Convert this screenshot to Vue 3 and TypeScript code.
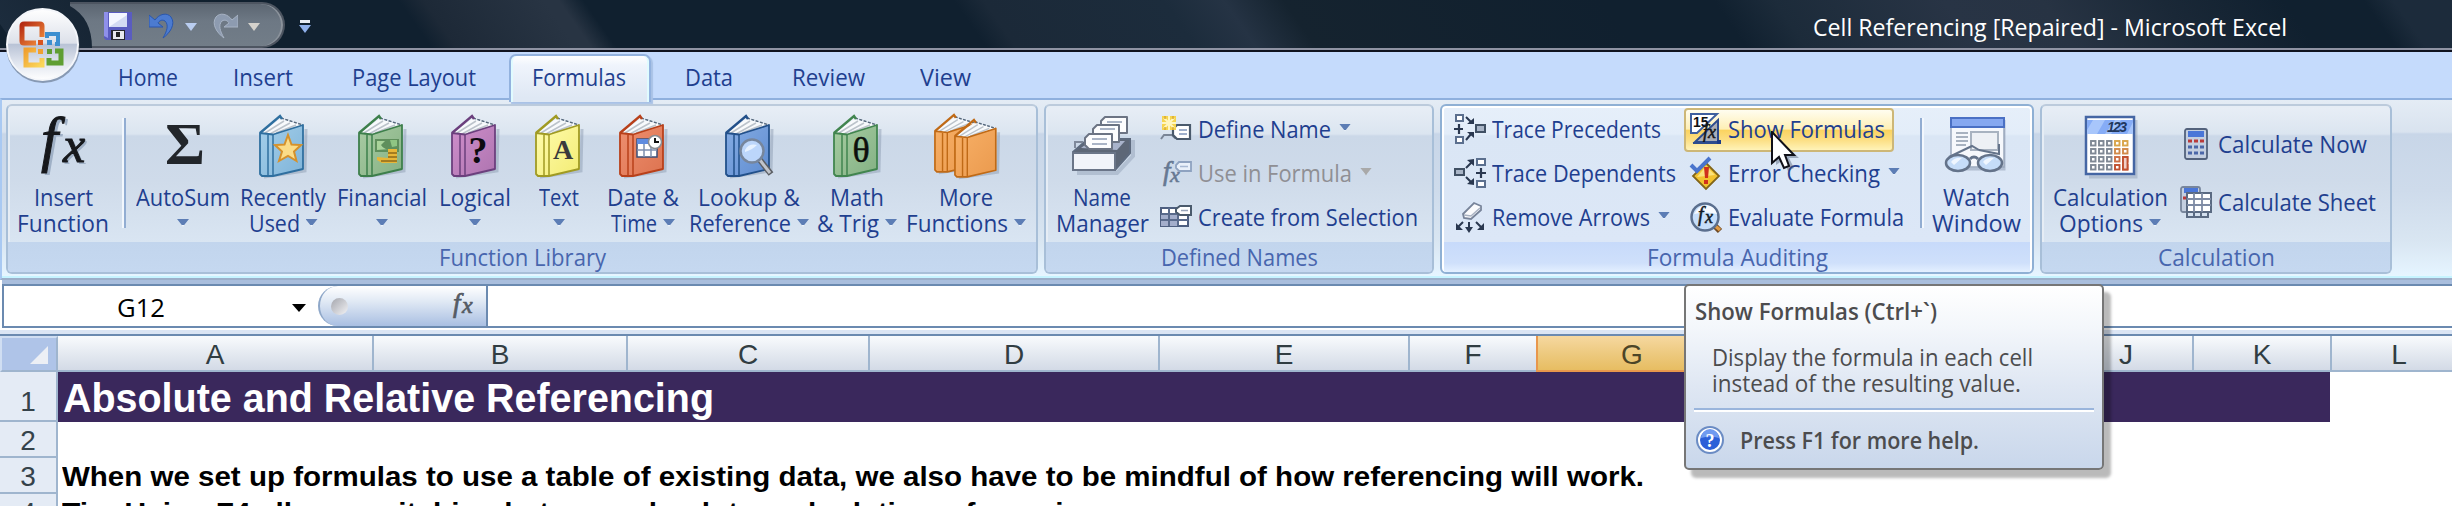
<script setup lang="ts">
import type { Directive } from 'vue'

// Condenses or widens a label so that it takes exactly the given advance width.
const vFit: Directive<HTMLElement, number> = {
  mounted(el, { value }) {
    const natural = el.getBoundingClientRect().width
    if (!natural) return
    el.style.transform = `scaleX(${value / natural})`
    el.style.marginRight = `${value - natural}px`
  },
}

interface Line { t: string; w: number }
interface Book {
  kind: string
  width: number
  lines: Line[]
  fill: string
  light: string
  edge: string
}
interface Tab { t: string; w: number; left: number; active?: boolean }
interface Column { n?: string; w: number; on?: boolean }

const tabs: Tab[] = [
  { t: 'Home', w: 60, left: 118 },
  { t: 'Insert', w: 60, left: 55 },
  { t: 'Page Layout', w: 124, left: 59 },
  { t: 'Formulas', w: 94, left: 33, active: true },
  { t: 'Data', w: 48, left: 34 },
  { t: 'Review', w: 73, left: 59 },
  { t: 'View', w: 51, left: 55 },
]

const books: Book[] = [
  { kind: 'star', width: 102, lines: [{ t: 'Recently', w: 86 }, { t: 'Used', w: 51 }], fill: '#7fb4d9', light: '#a5cfea', edge: '#2f6f9f' },
  { kind: 'money', width: 96, lines: [{ t: 'Financial', w: 90 }], fill: '#85b183', light: '#a9cba4', edge: '#3d7f4b' },
  { kind: 'question', width: 90, lines: [{ t: 'Logical', w: 72 }], fill: '#ae74b0', light: '#cf8fcb', edge: '#6b3f7d' },
  { kind: 'letter', width: 78, lines: [{ t: 'Text', w: 40 }], fill: '#f3ec74', light: '#fffcae', edge: '#a09a22' },
  { kind: 'date', width: 90, lines: [{ t: 'Date &', w: 72 }, { t: 'Time', w: 46 }], fill: '#dd7350', light: '#ee9070', edge: '#b8401a' },
  { kind: 'lens', width: 122, lines: [{ t: 'Lookup &', w: 102 }, { t: 'Reference', w: 102 }], fill: '#5f8cd0', light: '#86ade4', edge: '#22508a' },
  { kind: 'theta', width: 94, lines: [{ t: 'Math', w: 54 }, { t: '& Trig', w: 62 }], fill: '#84b184', light: '#a6cca1', edge: '#41854f' },
  { kind: 'pair', width: 124, lines: [{ t: 'More', w: 54 }, { t: 'Functions', w: 102 }], fill: '#eb9a4e', light: '#f7b067', edge: '#c06a16' },
]

// The wide unnamed column lies behind the tooltip.
const columns: Column[] = [
  { n: 'A', w: 316 }, { n: 'B', w: 254 }, { n: 'C', w: 242 }, { n: 'D', w: 290 },
  { n: 'E', w: 250 }, { n: 'F', w: 128 }, { n: 'G', w: 190, on: true }, { w: 332 },
  { n: 'J', w: 134 }, { n: 'K', w: 138 }, { n: 'L', w: 136 },
]

const keyRows = [0, 1, 2, 3]
const keyCols = [0, 1, 2, 3, 4]
const keyColor = (r: number, c: number) => (c < 3 ? '#7f8894' : ['#d9a54a', '#d18a4a', '#cc6f45', '#c05030'][r])
</script>

<template>
  <div class="window">
    <header class="titlebar">
      <div class="quick">
        <svg class="save" viewBox="0 0 28 28">
          <path d="M0 0H28V28H2L0 26Z" fill="#5a5cc0" />
          <path d="M0 0H4V26L0 24Z" fill="#8f90ea" />
          <rect x="5" y="1" width="18" height="14" fill="#f4f6ff" />
          <path d="M5 15L23 3V15Z" fill="#d3daf3" />
          <rect x="7" y="18" width="14" height="10" fill="#26262e" />
          <rect x="9" y="19" width="11" height="8" fill="#e8e8ee" />
          <rect x="12" y="20" width="4" height="5" fill="#222" />
        </svg>
        <svg class="undo" viewBox="0 0 26 28">
          <path d="M6 8C10 2 18 0 22 5C27 12 21 21 14 26C18 19 20 13 16 9C13 7 10 9 9 11L14 15H0V3Z" fill="#4c7bd0" stroke="#2a57ae" stroke-width="1" />
        </svg>
        <span class="drop blue"></span>
        <svg class="redo" viewBox="0 0 26 28">
          <path d="M20 8C16 2 8 0 4 5C-1 12 5 21 12 26C8 19 6 13 10 9C13 7 16 9 17 11L12 15H26V3Z" fill="#8d9bb0" stroke="#a7b3c4" stroke-width="1" />
        </svg>
        <span class="drop pale"></span>
      </div>
      <div class="customize"><i></i><span class="drop blue"></span></div>
      <span v-fit="474" class="caption">Cell Referencing [Repaired] - Microsoft Excel</span>
    </header>

    <svg class="orb" viewBox="0 0 84 84">
      <defs>
        <linearGradient id="orbFill" x1="0" y1="0" x2="0" y2="1">
          <stop offset="0" stop-color="#ffffff" /><stop offset=".48" stop-color="#dde1ea" />
          <stop offset=".5" stop-color="#b9c3d6" /><stop offset=".75" stop-color="#dfe4ee" /><stop offset="1" stop-color="#ffffff" />
        </linearGradient>
        <linearGradient id="orbRed" x1="0" y1="0" x2="1" y2="1"><stop offset="0" stop-color="#b52c14" /><stop offset="1" stop-color="#f08a3a" /></linearGradient>
        <linearGradient id="orbYellow" x1="0" y1="0" x2="1" y2="1"><stop offset="0" stop-color="#f0a030" /><stop offset="1" stop-color="#fbd75a" /></linearGradient>
      </defs>
      <circle cx="43" cy="46" r="37" fill="#3c4a5c" opacity=".45" />
      <circle cx="42.500" cy="44.500" r="35.500" fill="url(#orbFill)" stroke="#f4f6fa" stroke-width="2" />
      <path d="M36 43H24Q22 43 22 41V26Q22 24 24 24H40Q42 24 42 26V37" fill="none" stroke="url(#orbRed)" stroke-width="5" />
      <path d="M47 38V34H58V44H55" fill="none" stroke="#3d8fd0" stroke-width="4" />
      <path d="M36 50H26V65H42V58" fill="none" stroke="url(#orbYellow)" stroke-width="5" />
      <path d="M55 51H61V63H49V58" fill="none" stroke="#5f9e32" stroke-width="5" />
      <rect x="38" y="40" width="5" height="5" fill="#d8541e" /><rect x="47" y="40" width="5" height="5" fill="#3d8fd0" />
      <rect x="38" y="49" width="5" height="5" fill="#f0a030" /><rect x="47" y="49" width="5" height="5" fill="#5f9e32" />
    </svg>

    <nav class="tabs">
      <span v-for="tab in tabs" :key="tab.t" class="tab" :class="{ active: tab.active }" :style="{ marginLeft: tab.left + 'px' }">
        <span v-fit="tab.w" class="label">{{ tab.t }}</span>
      </span>
    </nav>

    <section class="ribbon">
      <div class="group library">
        <div class="body">
          <div class="big insert">
            <div class="art">
              <svg width="60" height="64" viewBox="0 0 60 64">
                <g fill="#9fb0c6" transform="translate(2 2)"><text class="fx" x="9" y="46" font-size="61">f</text><text class="fx" x="30" y="48" font-size="50">x</text></g>
                <g fill="#16181c" stroke="#16181c" stroke-width="1"><text class="fx" x="8" y="46" font-size="61">f</text><text class="fx" x="30" y="48" font-size="50">x</text></g>
              </svg>
            </div>
            <div class="line"><span v-fit="59" class="label">Insert</span></div>
            <div class="line"><span v-fit="92" class="label">Function</span></div>
          </div>
          <i class="rule first"></i>
          <div class="big sum">
            <div class="art">
              <svg width="60" height="64" viewBox="0 0 60 64">
                <text class="sigma" x="32" y="50" text-anchor="middle" textLength="40" lengthAdjust="spacingAndGlyphs" font-size="59" fill="#22262b">Σ</text>
              </svg>
            </div>
            <div class="line"><span v-fit="94" class="label">AutoSum</span></div>
            <div class="line"><i class="arrow"></i></div>
          </div>
          <div v-for="b in books" :key="b.kind" class="big" :style="{ width: b.width + 'px' }">
            <div class="art">
              <svg :width="b.kind === 'pair' ? 66 : 50" height="66" :viewBox="b.kind === 'pair' ? '0 0 66 66' : '0 0 50 66'">
                <defs>
                  <linearGradient :id="'cover-' + b.kind" x1="0" y1="0" x2="1" y2="1">
                    <stop offset="0" :stop-color="b.light" /><stop offset="1" :stop-color="b.fill" />
                  </linearGradient>
                </defs>
                <g v-for="n in (b.kind === 'pair' ? 2 : 1)" :key="n" :transform="b.kind === 'pair' ? `translate(${(n - 1) * 20 + 1} ${(n - 1) * 5 - 1}) scale(.95)` : 'translate(1 0)'">
                  <path d="M5 63L46 57L47 15" fill="none" stroke="#8796ad" stroke-width="3" opacity=".45" />
                  <path d="M2 19L21 5L44 11L14 21Z" fill="#f8fafc" />
                  <path d="M6 19L25 7M11 20L31 9M17 19L37 11" stroke="#bcc3cb" stroke-width="1.500" />
                  <path d="M22 4L44 11" stroke="#56687c" stroke-width="1.500" stroke-dasharray="3 1.500" />
                  <path d="M1 19L14 20.500L44 11V55L14 62H3L1 60Z" :fill="`url(#cover-${b.kind})`" :stroke="b.edge" stroke-width="1.800" stroke-linejoin="round" />
                  <path d="M1 19L21 2L23 5" fill="none" :stroke="b.edge" stroke-width="2.400" />
                  <path d="M9 21V61M14 21V61" :stroke="b.edge" stroke-width="1.500" />
                </g>
                <path v-if="b.kind === 'star'" d="M30 21L33.500 30.500L43 31L36 37.500L38.500 47L30 42L21 47L24 37.500L17 31L26.500 30.500Z" fill="#fbdc88" stroke="#d5912c" stroke-width="2" />
                <g v-if="b.kind === 'money'">
                  <path d="M18 25H42V38H18Z" fill="#5f8f5c" /><path d="M20 27H28L24 31Q27 36 33 35L20 36Z" fill="#a9d39b" /><path d="M33 26H40V32L35 33Z" fill="#8fc583" />
                  <path d="M31 35H40V49H25L20 46V43L31 44Z" fill="#e7b638" /><path d="M31 39H40M31 43H40M24 47H40" stroke="#8f6a1a" stroke-width="1.500" />
                </g>
                <text v-if="b.kind === 'question'" class="mark bold" x="28" y="49" text-anchor="middle" font-size="38" fill="#0d0a10">?</text>
                <text v-if="b.kind === 'letter'" class="mark bold" x="29" y="45" text-anchor="middle" font-size="28" fill="#3a3a3c">A</text>
                <g v-if="b.kind === 'date'">
                  <rect x="19" y="25" width="20" height="18" fill="#fff" stroke="#3b4f78" stroke-width="1.500" /><rect x="19" y="25" width="20" height="5" fill="#5f8ce0" />
                  <path d="M19 36H39M26 30V43M33 30V43" stroke="#7d8fae" stroke-width="1.500" />
                  <circle cx="37" cy="28" r="6.500" fill="#fff" stroke="#8a8d92" stroke-width="1.500" /><path d="M37 24V28H41" fill="none" stroke="#111" stroke-width="2" />
                </g>
                <g v-if="b.kind === 'lens'">
                  <path d="M36 46L47 60" stroke="#5b5e63" stroke-width="6" /><path d="M36 46L46 59" stroke="#c0c4ca" stroke-width="3" />
                  <circle cx="28" cy="37" r="11.500" fill="#bcd6fb" stroke="#77869c" stroke-width="2.500" /><path d="M21 36Q25 29 33 31Q28 36 21 38Z" fill="#e6f1ff" />
                </g>
                <text v-if="b.kind === 'theta'" class="mark" x="29" y="48" text-anchor="middle" font-size="36" fill="#0c100c" stroke="#0c100c" stroke-width=".500">θ</text>
              </svg>
            </div>
            <div class="line"><span v-fit="b.lines[0].w" class="label">{{ b.lines[0].t }}</span></div>
            <div class="line"><span v-if="b.lines[1]" v-fit="b.lines[1].w" class="label">{{ b.lines[1].t }}</span><i class="arrow"></i></div>
          </div>
        </div>
        <div class="foot"><span v-fit="167" class="label">Function Library</span></div>
      </div>

      <div class="group names">
        <div class="body">
          <div class="big manager">
            <div class="art">
              <svg width="62" height="64" viewBox="0 0 62 64">
                <path d="M6 59H46L62 42V26" fill="none" stroke="#8796ad" stroke-width="4" opacity=".4" />
                <path d="M2 38L17 25H59V39L44 56H2Z" fill="#5d6777" stroke="#5d6a7e" stroke-width="2" /><path d="M10 34L19 27H54L46 36Z" fill="#a9b3cb" />
                <g fill="#fdfdfe" stroke="#6c7484" stroke-width="2" stroke-linejoin="round">
                  <path d="M34 3H56V19H34L30 14V7Z" /><path d="M26 11H48V28H26L22 23V15Z" /><path d="M18 20H41V35H18L14 31V24Z" />
                </g>
                <path d="M36 8H51M29 15H44M21 25H36M21 30H36" stroke="#aab4c6" stroke-width="2" />
                <path d="M4 34V28H12" fill="none" stroke="#7f899b" stroke-width="2" />
                <path d="M2 39H44V56H2Z" fill="#f1f4fa" stroke="#6a7588" stroke-width="2" />
              </svg>
            </div>
            <div class="line"><span v-fit="58" class="label">Name</span></div>
            <div class="line"><span v-fit="93" class="label">Manager</span></div>
          </div>
          <div class="stack">
            <div class="small">
              <svg class="ico" viewBox="0 0 32 32"><path d="M1 26L4 22H12L15 25H22" fill="none" stroke="#7a8596" stroke-width="2" /><path d="M17 12H30V26H17L13 22V16Z" fill="#fff" stroke="#4a5a6c" stroke-width="2.200" /><path d="M19 17H27M19 21H27" stroke="#9fb0cc" stroke-width="2" /><rect x="2" y="3" width="14" height="14" fill="#f5d44f" /><path d="M9 3V17M2 10H16M4 5L14 15M14 5L4 15" stroke="#fff6c0" stroke-width="2" /><path d="M5 3V6M13 3V6M5 14V17M13 14V17" stroke="#d9a92c" stroke-width="1.500" /></svg>
              <span v-fit="133" class="label">Define Name</span><i class="arrow far"></i>
            </div>
            <div class="small disabled">
              <svg class="ico" viewBox="0 0 32 32"><g fill="#667892" stroke="#667892" stroke-width=".600"><text class="fx" x="3" y="23" font-size="27">f</text><text class="fx" x="10" y="25" font-size="22">x</text></g><path d="M19 5H31V14H19L16 11V8Z" fill="#e9f0fa" stroke="#8ea2c0" stroke-width="1.800" /><path d="M20 9.500H28" stroke="#a8b9d4" stroke-width="1.500" /></svg>
              <span v-fit="154" class="label">Use in Formula</span><i class="arrow far"></i>
            </div>
            <div class="small">
              <svg class="ico" viewBox="0 0 32 32"><rect x="1" y="7" width="27" height="18" fill="#fff" stroke="#4e5f80" stroke-width="2" /><rect x="1" y="13" width="17" height="12" fill="#a3aecb" /><path d="M1 13H28M1 19H28M9 7V25M18 13V25" stroke="#5a6b8c" stroke-width="2" /><path d="M20 5H31V14H20L16 11V8Z" fill="#fff" stroke="#4a5a6c" stroke-width="2" /><path d="M21 9.500H28" stroke="#9aa6bb" stroke-width="1.500" /></svg>
              <span v-fit="220" class="label">Create from Selection</span>
            </div>
          </div>
        </div>
        <div class="foot"><span v-fit="157" class="label">Defined Names</span></div>
      </div>

      <div class="group audit hot">
        <div class="body">
          <div class="stack precedents">
            <div class="small">
              <svg class="ico" viewBox="0 0 32 32"><g fill="#fff" stroke="#5b6f8e" stroke-width="2"><rect x="2" y="2" width="7" height="6" /><rect x="2" y="24" width="7" height="6" /><rect x="22" y="12" width="9" height="7" fill="#a9b5c7" stroke="#405064" /></g><path d="M0 16H9M5 11V21" stroke="#2a3850" stroke-width="2.200" /><path d="M12 4L17 9M12 27L17 21" stroke="#2a3850" stroke-width="2" /><path d="M20 5V11H13ZM20 25V19H13Z" fill="#2a3850" /></svg>
              <span v-fit="169" class="label">Trace Precedents</span>
            </div>
            <div class="small">
              <svg class="ico" viewBox="0 0 32 32"><g fill="#fff" stroke="#5b6f8e" stroke-width="2"><rect x="23" y="2" width="8" height="6" /><rect x="23" y="24" width="8" height="6" /><rect x="1" y="12" width="9" height="6" fill="#a9b5c7" stroke="#405064" /></g><path d="M22 16H32M27 11V21" stroke="#2a3850" stroke-width="2.200" /><path d="M12 11L18 5M12 20L18 26" stroke="#2a3850" stroke-width="2" /><path d="M20 2V9L13 3ZM20 28V21L13 27Z" fill="#2a3850" /></svg>
              <span v-fit="184" class="label">Trace Dependents</span>
            </div>
            <div class="small">
              <svg class="ico" viewBox="0 0 32 32"><path d="M9 13L20 2L27 5V9L17 18L10 17Z" fill="#fbfbfd" stroke="#78849a" stroke-width="1.800" /><path d="M10 14L17 15L26 7" fill="none" stroke="#a9b2c2" stroke-width="1.500" /><path d="M9 21L4 26M15 21V29M22 21L27 26" stroke="#2a3850" stroke-width="2" /><path d="M2 22V29H9ZM11 26H19L15 32ZM30 22V29H23Z" fill="#2a3850" /></svg>
              <span v-fit="158" class="label">Remove Arrows</span><i class="arrow far"></i>
            </div>
          </div>
          <div class="stack checks">
            <div class="small selected">
              <svg class="ico" viewBox="0 0 32 32"><path d="M1 1H27L7 20H1Z" fill="#fff" stroke="#3e5f9e" stroke-width="2" /><text class="num" x="3" y="14" font-size="14" fill="#111">15</text><path d="M28 7V29H5Z" fill="#a9adb5" stroke="#2d4c8e" stroke-width="2" /><text class="fx" x="13" y="25" font-size="18" fill="#151515" stroke="#151515" stroke-width=".500">fx</text><path d="M3 30H30" stroke="#2d4c8e" stroke-width="2" /><rect x="27" y="27" width="4" height="4" fill="#1c3c88" /></svg>
              <span v-fit="157" class="label">Show Formulas</span>
            </div>
            <div class="small">
              <svg class="ico" viewBox="0 0 32 32"><path d="M16 6L29 19L16 32L3 19Z" fill="#f2c230" stroke="#82651a" stroke-width="1.800" /><path d="M16 9L25 18L7 20Z" fill="#fbe27c" /><path d="M14 10H19L18 21H15Z" fill="#d0301c" /><rect x="14" y="23" width="4" height="4" fill="#d0301c" /><path d="M1 8L7 14L20 1" fill="none" stroke="#4a74cc" stroke-width="4" /></svg>
              <span v-fit="152" class="label">Error Checking</span><i class="arrow far"></i>
            </div>
            <div class="small">
              <svg class="ico" viewBox="0 0 32 32"><path d="M24 24L30 30" stroke="#6f4a24" stroke-width="6" /><path d="M24 24L30 29" stroke="#e09a44" stroke-width="3.500" /><circle cx="15" cy="16" r="13.500" fill="#c6defa" stroke="#5b6f8e" stroke-width="2.500" /><path d="M4 13Q8 5 16 4Q25 5 27 13Q16 10 4 13Z" fill="#fff" opacity=".85" /><g fill="#111a26" stroke="#111a26" stroke-width=".500"><text class="fx" x="8" y="20" font-size="20">f</text><text class="fx" x="15" y="22" font-size="18">x</text></g></svg>
              <span v-fit="176" class="label">Evaluate Formula</span>
            </div>
          </div>
          <i class="rule second"></i>
          <div class="big watch">
            <div class="art">
              <svg width="64" height="64" viewBox="0 0 64 64">
                <path d="M10 55H60V6" fill="none" stroke="#8796ad" stroke-width="3" opacity=".5" />
                <rect x="7" y="4" width="53" height="49" fill="#f6f8fc" stroke="#9aa8bd" stroke-width="1.500" /><rect x="7" y="4" width="53" height="9" fill="#86a8f0" stroke="#4a70c4" stroke-width="2" />
                <path d="M12 19H24M12 23H24M12 27H24M12 31H22" stroke="#a8b2c0" stroke-width="2" /><rect x="27" y="18" width="27" height="18" fill="#edf0f5" stroke="#a8b2c0" stroke-width="2" />
                <path d="M5 43L28 32L35 36M35 36L55 40V30" fill="none" stroke="#64738a" stroke-width="2" />
                <g fill="#c5dcf8" stroke="#64738a" stroke-width="2.500"><ellipse cx="14" cy="49" rx="12" ry="8" /><ellipse cx="46" cy="49" rx="12" ry="8" /></g><path d="M26 45Q30 41 34 45" fill="none" stroke="#64738a" stroke-width="3" />
                <path d="M7 48Q11 43 18 44L10 51ZM39 48Q43 43 50 44L42 51Z" fill="#eff6ff" />
              </svg>
            </div>
            <div class="line"><span v-fit="67" class="label">Watch</span></div>
            <div class="line"><span v-fit="89" class="label">Window</span></div>
          </div>
        </div>
        <div class="foot"><span v-fit="181" class="label">Formula Auditing</span></div>
      </div>

      <div class="group calc">
        <div class="body">
          <div class="big options">
            <div class="art">
              <svg width="54" height="66" viewBox="0 0 54 66">
                <path d="M6 63H53V6" fill="none" stroke="#8796ad" stroke-width="3" opacity=".4" />
                <rect x="3" y="3" width="48" height="57" fill="#fff" stroke="#4566a4" stroke-width="2.500" /><rect x="4" y="6" width="46" height="14" fill="#86acf6" /><path d="M10 6H22L14 20H4V16ZM32 6H38L28 20H22ZM50 8V20H44Z" fill="#a8c6fb" />
                <text class="lcd" x="24" y="18" font-size="14" textLength="20" fill="#22385e">123</text>
                <g v-for="r in keyRows" :key="r"><rect v-for="c in keyCols" :key="c" :x="8 + c * 8" :y="27 + r * 8" width="4.500" height="4.500" fill="#fff" :stroke="keyColor(r, c)" stroke-width="1.900" /></g>
                <rect x="40" y="43" width="4.500" height="12.500" fill="#f0cfc8" stroke="#c05030" stroke-width="1.900" />
              </svg>
            </div>
            <div class="line"><span v-fit="115" class="label">Calculation</span></div>
            <div class="line"><span v-fit="84" class="label">Options</span><i class="arrow"></i></div>
          </div>
          <div class="stack two">
            <div class="small">
              <svg class="ico" viewBox="0 0 32 32"><rect x="5" y="1" width="22" height="30" rx="2" fill="#c4cfe0" stroke="#53627c" stroke-width="1.800" /><rect x="8" y="3" width="16" height="6" fill="#4a76d8" /><path d="M8 13H12M14 13H18M20 13H24" stroke="#b83a3a" stroke-width="3.200" /><path d="M8 19H12M14 19H18M20 19H24M8 25H12M14 25H18M20 25H24" stroke="#4b67a8" stroke-width="3.200" /></svg>
              <span v-fit="149" class="label">Calculate Now</span>
            </div>
            <div class="small">
              <svg class="ico" viewBox="0 0 32 32"><rect x="1" y="1" width="19" height="25" rx="2" fill="#c4cfe0" stroke="#78869c" stroke-width="1.800" /><rect x="4" y="2" width="14" height="5" fill="#4a76d8" /><path d="M3 12H6" stroke="#b83a3a" stroke-width="3" /><rect x="7" y="7" width="24" height="19" fill="#fff" stroke="#5a6a82" stroke-width="2" /><path d="M7 13H31M7 19H31M14 7V26M22 7V26" stroke="#7e8ba4" stroke-width="1.800" /><path d="M7 27V31H28V27M14 27V31M21 27V31" fill="none" stroke="#5a6a82" stroke-width="2" /></svg>
              <span v-fit="158" class="label">Calculate Sheet</span>
            </div>
          </div>
        </div>
        <div class="foot"><span v-fit="117" class="label">Calculation</span></div>
      </div>
    </section>

    <section class="formulabar">
      <div class="namebox"><span v-fit="48" class="cell">G12</span><i class="pick"></i></div>
      <div class="fxbox">
        <i class="knob"></i>
        <svg width="30" height="34" viewBox="0 0 30 34"><g fill="#555b64" stroke="#555b64" stroke-width=".700"><text class="fx" x="5" y="23" font-size="27">f</text><text class="fx" x="14" y="23.500" font-size="24">x</text></g></svg>
      </div>
      <div class="entry"></div>
    </section>
    <div class="gutter"></div>

    <section class="sheet">
      <div class="heads">
        <div class="corner"><svg width="18" height="18" viewBox="0 0 18 18"><path d="M18 0V18H0Z" fill="#eceff5" /></svg></div>
        <div v-for="(c, i) in columns" :key="i" class="head" :class="{ on: c.on }" :style="{ width: c.w + 'px' }">{{ c.n }}</div>
      </div>
      <div class="row r1"><div class="num1">1</div><div class="banner"><span v-fit="651">Absolute and Relative Referencing</span></div></div>
      <div class="row"><div class="num1">2</div></div>
      <div class="row"><div class="num1">3</div><span v-fit="1582" class="text">When we set up formulas to use a table of existing data, we also have to be mindful of how referencing will work.</span></div>
      <div class="row"><div class="num1">4</div><span v-fit="1038" class="text">Tip: Using F4 allows switching between absolute and relative referencing</span></div>
    </section>

    <aside class="tooltip">
      <div class="tt-title"><span v-fit="242">Show Formulas (Ctrl+`)</span></div>
      <div class="tt-text"><span v-fit="321">Display the formula in each cell</span></div>
      <div class="tt-text"><span v-fit="309">instead of the resulting value.</span></div>
      <hr />
      <div class="tt-help">
        <svg width="28" height="28" viewBox="0 0 28 28"><circle cx="14" cy="14" r="13" fill="#fff" stroke="#6b8cc4" stroke-width="2" /><circle cx="14" cy="14" r="10" fill="#2c5fd8" /><path d="M5 12A9 9 0 0 1 23 12Q14 9 5 12Z" fill="#6f9af0" /><text class="q" x="14" y="20.500" text-anchor="middle" font-size="18" fill="#fff">?</text></svg>
        <span v-fit="239">Press F1 for more help.</span>
      </div>
    </aside>

    <svg class="cursor" viewBox="0 0 30 42">
      <path d="M5 5V34L12 29L17 40L23 37L18 27H28Z" fill="#40506a" opacity=".4" />
      <path d="M1 1V32L8 26L13 37L18 35L14 24H23Z" fill="#fff" stroke="#101018" stroke-width="2" />
    </svg>
  </div>
</template>

<style>
body { margin: 0; overflow: hidden; background: #fff; }
</style>

<style scoped>
.window { position: relative; width: 2452px; height: 506px; overflow: hidden; background: #fff; font-family: "Open Sans", "Noto Sans", sans-serif; font-size: 23px; color: #1f3f8f; }
.window *, .window *::before { box-sizing: border-box; }
span { display: inline-block; white-space: pre; transform-origin: left center; }
i { display: block; flex: none; }
.fx { font-family: "Liberation Serif", serif; font-style: italic; }
.mark, .sigma { font-family: "Liberation Serif", serif; }
.sigma, .bold { font-weight: bold; }
.num { font-family: "Liberation Sans", sans-serif; font-weight: bold; }
.lcd { font-family: "Liberation Sans", sans-serif; font-style: italic; font-weight: bold; }
.q { font-family: "Liberation Serif", serif; font-weight: bold; }

.titlebar { position: relative; display: flex; height: 52px; border-bottom: 2px solid #10131f; background: #10202f; overflow: hidden; box-shadow: inset 0 -2px #8f93a3; }
.titlebar::before { content: ""; position: absolute; left: 0; top: 0; width: 2490px; height: 48px; transform: skewX(35deg); background: linear-gradient(90deg, #1c2c3d 0, #13212f 150px, #10202f 250px, #10202f 415px, #1d2937 440px, #283443 560px, #283443 575px, #10202f 600px, #10202f 970px, #1b2938 1000px, #1c2c3c 1180px, #253344 1240px, #15232f 1300px, #10202f 1620px, #10202f 1730px, #1c2b3a 1790px, #283445 1960px, #273343 2060px, #1a2837 2180px, #10202f 2300px, #10202f 2380px, #1c2b3b 2410px); }
.titlebar > * { position: relative; }
.quick { display: flex; align-items: flex-start; width: 215px; height: 46px; margin: 2px 0 0 70px; padding-left: 34px; background: linear-gradient(#5c6672, #6d7884 40%, #727d88); border: 2px solid #4d5561; border-left: 0; border-radius: 0 24px 24px 0; clip-path: path("M0 0H215V46H22Q22 16 0 4Z"); box-shadow: inset -2px 0 #8b929b; }
.save { width: 28px; height: 28px; margin-top: 8px; }
.undo { width: 26px; height: 28px; margin: 8px 0 0 17px; }
.redo { width: 26px; height: 28px; margin: 8px 0 0 15px; }
.drop { width: 12px; height: 8px; clip-path: polygon(0 0, 100% 0, 50% 100%); }
.quick .drop { margin-top: 19px; margin-left: 10px; }
.drop.blue { background: #b9cdf0; }
.customize .drop.blue { background: #8fb0ec; }
.drop.pale { background: #d5d2cc; }
.customize { width: 12px; margin: 20px 0 0 14px; }
.customize i { width: 10px; height: 3px; margin: 0 0 2px 1px; background: #e8ecf4; }
.customize .drop { display: block; }
.caption { margin-left: 1502px; height: 48px; line-height: 54px; font-size: 24px; color: #fff; }
.orb { position: absolute; left: 0; top: 0; width: 84px; height: 84px; z-index: 2; }

.tabs { position: relative; z-index: 1; display: flex; height: 46px; background: #c5dbfc; line-height: 46px; }
.tab { height: 48px; padding-top: 3px; line-height: 44px; }
.tab .label { display: inline-block; vertical-align: top; }
.tab.active { width: 142px; height: 48px; padding: 1px 0 0 21px; margin: 2px 0 -2px; line-height: 40px; border: 2px solid #93b2de; border-bottom: 0; border-radius: 7px 7px 0 0; background: linear-gradient(#fff, #eff4fc 20%, #dfe8f4 90%, #dfe8f4); box-shadow: inset 2px 0 #e0fbff, inset -2px 0 #e0fbff, 2px 2px 1px #a9c2e6; }

.ribbon { display: flex; height: 182px; padding: 4px 0 0 4px; gap: 6px; border-top: 2px solid #8fb0de; border-bottom: 2px solid #9dafc9; border-left: 2px solid #a9c9f2; background: linear-gradient(#e4ecf5 0, #d9e3ef 32px, #c8d6e8 34px, #cedbeb 90px, #d9e6f2 142px, #e4f3fe 172px, #e6f6ff 176px, #c6f4ff 176px, #c6f4ff 178px); }
.group { display: flex; flex-direction: column; flex: none; height: 170px; border: 2px solid #a8bfd8; border-top-color: #bccbdc; border-radius: 6px; background: linear-gradient(#e8eef6, #dbe5f0 28px, #cbd8e8 30px, #cfdbea 75px, #d9e5f2 136px); overflow: hidden; box-shadow: inset 2px 2px #e6edf5; }
.library { width: 1032px; }
.names { width: 390px; }
.audit { width: 594px; }
.calc { width: 352px; }
.hot { border-color: #8fb0d4; background: linear-gradient(#e6effa, #e3edf9 28px, #dae6f5 30px, #dce7f7 136px); box-shadow: inset 0 0 0 2px #fff; }
.body { display: flex; height: 136px; }
.foot { display: flex; justify-content: center; height: 30px; line-height: 30px; color: #4866ae; background: linear-gradient(#c2d5ed, #c5d8f0); }
.hot .foot { margin: 0 2px; background: linear-gradient(#c7dafa, #cfe0fb 70%, #e4f0ff); }
.names .body { padding-left: 4px; }
.audit .body { padding-left: 6px; }
.calc .body { padding-left: 2px; }
.big { flex: none; }
.insert { width: 110px; }
.sum { width: 98px; }
.manager, .watch { width: 104px; }
.options { width: 132px; }
.art { display: flex; justify-content: center; height: 78px; padding-top: 8px; }
.art svg { display: block; flex: none; overflow: visible; }
.line { display: flex; justify-content: center; align-items: center; gap: 6px; height: 26px; line-height: 26px; }
.arrow { width: 12px; height: 8px; background: linear-gradient(#5c7db5 75%, #eef4fb 76%); clip-path: polygon(0 0, 100% 0, 60% 75%, 50% 100%, 40% 75%); }
.arrow.far { margin-left: 2px; margin-top: -3px; }
.rule { width: 4px; height: 110px; margin-top: 12px; background: linear-gradient(90deg, #f2f7fd 50%, #92add2 50%); }
.rule.first { margin-left: 4px; margin-right: 8px; }
.rule.second { background: linear-gradient(90deg, #92add2 50%, #f2f7fd 50%); }
.stack { display: flex; flex-direction: column; align-items: flex-start; padding-top: 2px; }
.precedents, .checks { width: 236px; }
.two { margin-left: -2px; padding-top: 10px; }
.small { display: flex; align-items: center; gap: 6px; height: 44px; padding: 0 8px 2px 6px; line-height: 42px; }
.two .small { height: 58px; }
.ico { width: 32px; height: 32px; flex: none; overflow: visible; }
.disabled { color: #8f8f94; }
.disabled .arrow { background: #a9a9a9; }
.selected { width: 210px; padding: 0 0 2px 4px; border: 2px solid #cdb777; border-radius: 4px; background: linear-gradient(#fffdf0, #feefb5 48%, #fbd35f 50%, #fcdf84 75%, #fff3b8); line-height: 38px; }

.formulabar { display: flex; height: 48px; border-top: 6px solid #6b8ab0; border-bottom: 2px solid #6b8ab0; border-left: 2px solid #6b8ab0; border-image: linear-gradient(#a9bedd 0, #a9bedd 8.300%, #6b8ab0 8.400%) 6 0 2 0; background: linear-gradient(90deg, #6b8ab0 2px, #fff 2px); }
.namebox { display: flex; align-items: center; justify-content: space-between; width: 304px; padding: 2px 0 0 115px; color: #000; font-size: 25px; }
.pick { width: 14px; height: 8px; margin-top: 2px; background: #000; clip-path: polygon(0 0, 100% 0, 50% 100%); }
.fxbox { display: flex; align-items: center; justify-content: space-between; width: 170px; margin-left: 12px; padding: 0 8px 0 11px; border-left: 2px solid #8fa8c9; border-right: 2px solid #6b8ab0; border-radius: 20px 0 0 20px; background: linear-gradient(#fff, #dfe8f4 40%, #a9bfe2); }
.knob { width: 17px; height: 17px; border-radius: 50%; background: linear-gradient(135deg, #a4a6ad, #f3f3f6); }
.entry { flex: 1; background: #fff; }
.gutter { height: 8px; background: #dbe5f4; border-top: 2px solid #fff; border-bottom: 2px solid #6b8ab0; }

.sheet { font-family: "Liberation Sans", Arial, sans-serif; font-size: 28px; }
.heads { display: flex; width: 2520px; height: 36px; }
.corner { display: flex; justify-content: flex-end; align-items: flex-end; width: 58px; padding: 0 8px 6px 0; border: 2px solid #d0def2; border-right-color: #9fb5ce; border-bottom-color: #9fb5ce; background: #afc4e8; }
.corner svg { display: block; }
.head { flex: none; text-align: center; line-height: 37px; color: #313d42; border-right: 2px solid #9fb5ce; border-bottom: 2px solid #9fb5ce; background: linear-gradient(#f9fbfd, #e5eaf1 50%, #d3dae6); }
.head.on { color: #4c4527; border-color: #e8974c; background: linear-gradient(#f6d8a0, #edca80 50%, #e7bd62); box-shadow: -2px 0 #e8974c; }
.row { display: flex; height: 36px; color: #000; font-weight: bold; }
.r1 { height: 50px; }
.num1 { flex: none; width: 58px; border-right: 2px solid #9fb5ce; border-bottom: 2px solid #9fb5ce; background: #e4ebf5; color: #35424a; font-weight: normal; text-align: center; line-height: 37px; }
.r1 .num1 { line-height: 60px; }
.banner { width: 2272px; height: 50px; padding-left: 5px; font-size: 40px; line-height: 52px; color: #fff; background: #3a285c; }
.text { margin-left: 4px; line-height: 37px; }

.tooltip { position: absolute; z-index: 3; left: 1684px; top: 284px; width: 420px; height: 186px; padding: 0 8px; border: 2px solid #767676; border-radius: 5px; background: linear-gradient(#fff, #f4f7fb 22%, #dfe7f3 55%, #c9d7eb); box-shadow: 7px 8px 3px rgba(0, 0, 0, .27); color: #4c4c4e; line-height: 26px; }
.tt-title { height: 54px; padding: 12px 0 0 1px; font-weight: 600; }
.tt-text { height: 26px; padding-left: 18px; margin-top: 4px; }
.tt-text + .tt-text { margin-top: 0; }
.tt-title span, .tt-text span { display: inline-block; vertical-align: top; }
hr { height: 4px; margin: 12px 0 0; border: 0; background: linear-gradient(#9ab5dc 50%, #fff 50%); }
.tt-help { display: flex; align-items: center; gap: 16px; margin-top: 14px; padding-left: 2px; font-weight: 600; }
.cursor { position: absolute; z-index: 4; left: 1771px; top: 131px; width: 30px; height: 42px; }
</style>
